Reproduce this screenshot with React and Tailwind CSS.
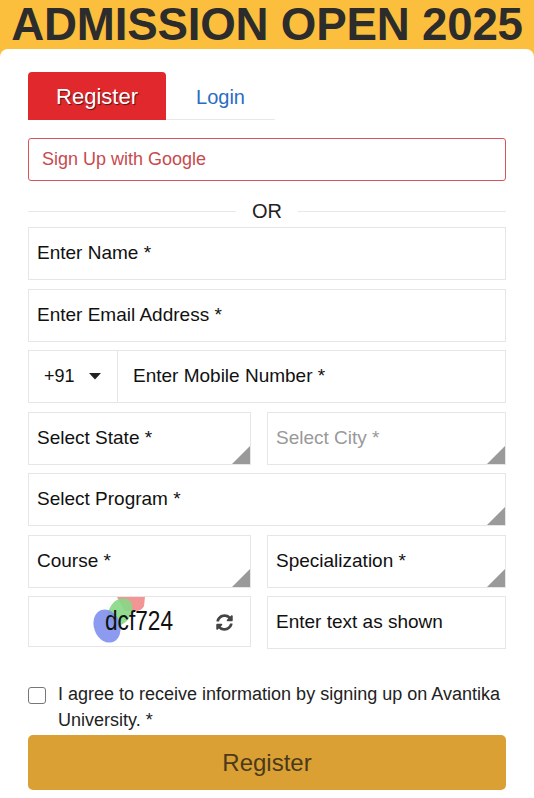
import React from 'react';
import { FaSyncAlt } from 'react-icons/fa';

const font = { fontFamily: '"Liberation Sans", Arial, sans-serif' };

const Field = ({ children, className = '' }) => (
    <div className={`relative h-[53px] border border-[#e6e6e6] bg-white flex items-center px-2 text-[19px] text-[#111] ${className}`}>
        {children}
    </div>
);

const SelectField = ({ label, muted }) => (
    <Field>
        <span className={muted ? 'text-[#999]' : ''}>{label}</span>
        {/* corner grip */}
        <svg className="absolute right-0 bottom-0" width="18" height="18" viewBox="0 0 18 18">
            <polygon points="18,0 18,18 0,18" fill="#9a9a9a" />
        </svg>
    </Field>
);

export default function App() {
    return (
        <div className="min-h-screen bg-[#fcbf3d] w-[534px]" style={font}>
            {/* Banner */}
            <div className="h-[49px] flex items-center justify-center">
                <h1 className="text-[45.7px] leading-none font-bold text-[#2c2c2c] tracking-[-0.2px]">ADMISSION OPEN 2025</h1>
            </div>

            {/* Card */}
            <div className="bg-white rounded-t-[8px] px-[28px] pt-[23px] pb-2 min-h-[749px]">
                {/* Tabs */}
                <div className="flex items-end">
                    <div className="w-[138px] h-[48px] bg-[#e1282d] rounded-t-[4px] flex items-center justify-center text-white text-[22px] [text-shadow:1px_1px_1px_rgba(0,0,0,0.6)]">
                        Register
                    </div>
                    <div className="w-[109px] h-[46px] border-b border-[#e8e8e8] flex items-center justify-center text-[#2a6cc4] text-[20px]">
                        Login
                    </div>
                </div>

                {/* Google */}
                <div className="mt-[18px] h-[43px] border border-[#d9545a] rounded-[3px] flex items-center px-[13px] text-[18px] text-[#c84a4e]">
                    Sign Up with Google
                </div>

                {/* OR divider */}
                <div className="flex items-center h-[46px] pt-[14px]">
                    <div className="h-px flex-1 bg-[#e8e8e8]" />
                    <span className="px-[16px] text-[20px] leading-none text-[#222]">OR</span>
                    <div className="h-px flex-1 bg-[#e8e8e8]" />
                </div>

                <div className="flex flex-col gap-[8.5px]">
                    <Field>Enter Name *</Field>
                    <Field>Enter Email Address *</Field>

                    <div className="flex h-[53px] border border-[#e6e6e6]">
                        <div className="w-[89px] border-r border-[#e6e6e6] flex items-center pl-[15px] text-[18px] text-[#111] gap-[14px]">
                            <span>+91</span>
                            <svg width="12" height="7" viewBox="0 0 12 7">
                                <polygon points="0,0 12,0 6,6.5" fill="#222" />
                            </svg>
                        </div>
                        <div className="flex-1 flex items-center px-[15px] text-[19px] text-[#111]">Enter Mobile Number *</div>
                    </div>

                    <div className="grid grid-cols-[223px_1fr] gap-4">
                        <SelectField label="Select State *" />
                        <SelectField label="Select City *" muted />
                    </div>

                    <SelectField label="Select Program *" />

                    <div className="grid grid-cols-[223px_1fr] gap-4">
                        <SelectField label="Course *" />
                        <SelectField label="Specialization *" />
                    </div>

                    <div className="grid grid-cols-[223px_1fr] gap-4 items-start">
                        {/* Captcha */}
                        <div className="relative h-[51px] border border-[#e6e6e6] flex items-center overflow-hidden">
                            <svg className="absolute left-0 top-0" width="150" height="50" viewBox="0 0 150 50">
                                <path d="M88 0 L116 0 L115 9 Q113 14 106 14 L96 14 Z" fill="#f28a8a" opacity="0.9" />
                                <ellipse cx="91" cy="15" rx="11" ry="15" transform="rotate(35 91 15)" fill="#86d886" opacity="0.9" />
                                <ellipse cx="78" cy="29" rx="13" ry="17" transform="rotate(-20 78 29)" fill="#8090ee" opacity="0.9" />
                            </svg>
                            <span className="relative ml-[76px] text-[27px] leading-none text-[#111] inline-block scale-x-[0.84] origin-left">dcf724</span>
                            <FaSyncAlt className="absolute left-[187px] top-[17px] text-[#444]" size={17} />
                        </div>
                        <Field>Enter text as shown</Field>
                    </div>
                </div>

                {/* Consent */}
                <div className="flex items-start mt-[37px] gap-[12px]">
                    <div className="mt-[1px] w-[18px] h-[17px] shrink-0 border border-[#777] rounded-[3px] bg-white" />
                    <p className="text-[18px] leading-[26px] text-[#222] -mt-[5px]">
                        I agree to receive information by signing up on Avantika University. *
                    </p>
                </div>

                <button className="mt-[2px] w-full h-[55px] rounded-[5px] bg-[#dba033] text-[24px] text-[#4a3a1c] flex items-center justify-center" style={font}>
                    Register
                </button>
            </div>
        </div>
    );
}
